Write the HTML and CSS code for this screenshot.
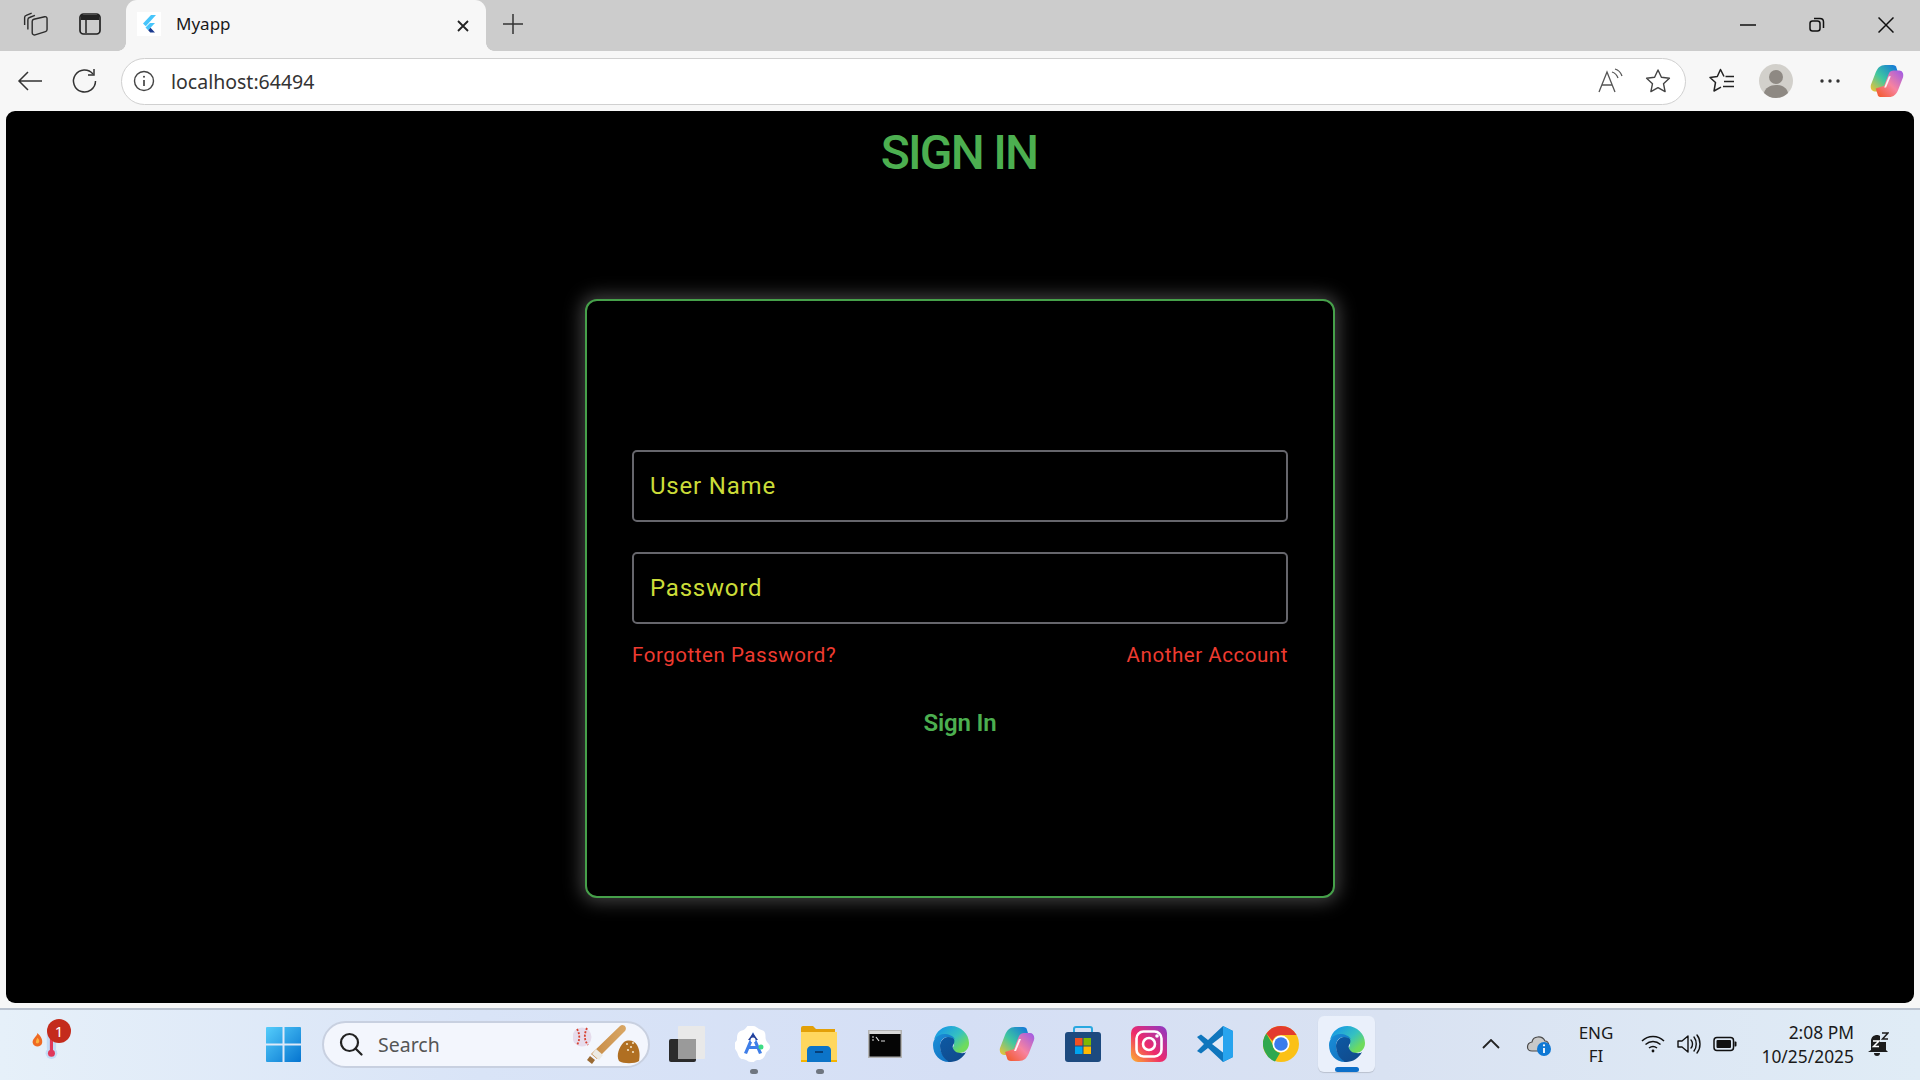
FILE: index.html
```html
<!DOCTYPE html>
<html lang="en">
<head>
<meta charset="utf-8">
<title>Myapp</title>
<link rel="stylesheet" href="styles.css">
</head>
<body>
<svg class="defs" width="0" height="0" aria-hidden="true">
  <defs>
    <linearGradient id="edgeA" x1="0.2" y1="0.1" x2="0.9" y2="0.7"><stop offset="0" stop-color="#1b9de2"/><stop offset="0.55" stop-color="#35c1c1"/><stop offset="1" stop-color="#6fdb5c"/></linearGradient>
    <linearGradient id="edgeB" x1="0" y1="0" x2="0.8" y2="1"><stop offset="0" stop-color="#0c59a4"/><stop offset="1" stop-color="#114a8b"/></linearGradient>
    <linearGradient id="edgeC" x1="0" y1="0" x2="1" y2="1"><stop offset="0" stop-color="#1b8fd8"/><stop offset="1" stop-color="#0f6cbd"/></linearGradient>
    <linearGradient id="copA" x1="0" y1="1" x2="1" y2="0"><stop offset="0" stop-color="#f9c22e"/><stop offset="0.45" stop-color="#3fc7a0"/><stop offset="1" stop-color="#0f6fe0"/></linearGradient>
    <linearGradient id="copB" x1="0" y1="1" x2="1" y2="0"><stop offset="0" stop-color="#f2551f"/><stop offset="0.5" stop-color="#f783a0"/><stop offset="1" stop-color="#9b59e8"/></linearGradient>
    <linearGradient id="winA" x1="0" y1="0" x2="1" y2="1"><stop offset="0" stop-color="#55cdfb"/><stop offset="1" stop-color="#0574d0"/></linearGradient>
    <linearGradient id="instaA" x1="0" y1="1" x2="1" y2="0"><stop offset="0" stop-color="#fdb42d"/><stop offset="0.45" stop-color="#ee2a6b"/><stop offset="1" stop-color="#8a3ac8"/></linearGradient>
    <linearGradient id="batA" x1="0" y1="0" x2="1" y2="0"><stop offset="0" stop-color="#c68a45"/><stop offset="1" stop-color="#d9a765"/></linearGradient>
    <symbol id="edge" viewBox="0 0 36 36">
      <path fill="url(#edgeA)" d="M1 14C3 5 10 0 18 0c10 0 18 8 18 17 0 6-4 10-10 10-4 0-7-2-7-4 0-1 2-2 2-5 0-4-4-7-9-7-5 0-10 1-11 3z"/>
      <path fill="url(#edgeC)" d="M0 19c0-6 5-11 11-11 5 0 9 2 11 5-2-1-4-2-7-2-5 0-8 4-8 9 0 7 5 13 12 15-1 1-2 1-3 1C7 36 0 29 0 19z"/>
      <path fill="url(#edgeB)" d="M7 20c0-5 4-9 8-9 3 0 5 1 6 2 1 2 0 5-1 6-1 2 0 5 3 7 3 1 8 2 10 0-3 6-9 10-16 10-1 0-2 0-2-1-4-2-8-8-8-15z"/>
    </symbol>
    <symbol id="copilot" viewBox="0 0 36 36">
      <path fill="url(#copA)" d="M21 1h3c2 0 4 1 4 3l2 6-9 3-5 13c-1 2-3 3-5 3H5C2 29 0 26 1 22L6 9c2-5 5-8 10-8z"/>
      <path fill="url(#copB)" d="M15 35h-3c-2 0-4-1-4-3l-2-6 9-3 5-13c1-2 3-3 5-3h6c3 0 5 3 4 7l-5 13c-2 5-5 8-10 8z"/>
      <path fill="#fff" d="M20 13h2l-5 12h-2z" opacity=".9"/>
    </symbol>
  </defs>
</svg>

<header class="titlebar">
  <div class="slot">
    <svg class="ic26" viewBox="0 0 24 24" fill="none" stroke="#2c2c2c" stroke-width="1.300" stroke-linejoin="round"><path d="M1.500 13V6c0-1 .6-1.700 1.500-2l5-2"/><path d="M4.500 17V8c0-1 .6-1.700 1.500-2l5-2"/><path d="M8.500 9.500c0-1 .6-1.600 1.500-1.900l10-2.300c1.200-.3 2.200.5 2.200 1.700V17c0 1-.6 1.700-1.500 2l-9.500 3c-1.300.4-2.700-.5-2.700-2z"/></svg>
  </div>
  <div class="slot">
    <svg class="ic22" viewBox="0 0 22 22"><rect x="1" y="1" width="20" height="20" rx="3.500" fill="none" stroke="#222" stroke-width="1.700"/><path d="M2 2h18v5H2z" fill="#222"/><path d="M7 7v13" stroke="#222" stroke-width="1.500"/></svg>
  </div>
  <div class="tab">
    <svg class="favicon" viewBox="0 0 24 24"><rect width="24" height="24" fill="#fff"/><path d="M14 3L6 11.500l2.800 2.800L19 3z" fill="#47c5fb"/><path d="M18 11h-5l-4.500 4.500 2.700 2.700z" fill="#47c5fb"/><path d="M11.200 18.200l2 2.300H18l-4.500-4.700z" fill="#1a3a8f"/></svg>
    <span class="tab-title">Myapp</span>
    <svg class="tab-close" viewBox="0 0 14 14" stroke="#222" stroke-width="1.800"><path d="M2 2l10 10M12 2L2 12"/></svg>
  </div>
  <div class="slot">
    <svg class="ic22" viewBox="0 0 22 22" stroke="#333" stroke-width="1.500"><path d="M11 1v20M1 11h20"/></svg>
  </div>
  <div class="grow"></div>
  <div class="winbtn"><svg class="ic16" viewBox="0 0 16 16" stroke="#111" stroke-width="1.500"><path d="M0 8h16"/></svg></div>
  <div class="winbtn"><svg class="ic16" viewBox="0 0 16 16" fill="none" stroke="#111" stroke-width="1.500"><rect x="1" y="4" width="10" height="10" rx="2.500"/><path d="M5 1.500h6c2.200 0 3.500 1.300 3.500 3.500v6"/></svg></div>
  <div class="winbtn"><svg class="ic16" viewBox="0 0 16 16" stroke="#111" stroke-width="1.500"><path d="M.5.500l15 15M15.500.500l-15 15"/></svg></div>
</header>

<nav class="toolbar">
  <div class="slot">
    <svg class="ic26" viewBox="0 0 26 26" fill="none" stroke="#333" stroke-width="1.500"><path d="M25 13H2M11 4l-9 9 9 9"/></svg>
  </div>
  <div class="slot">
    <svg class="ic26" viewBox="0 0 26 26" fill="none" stroke="#333" stroke-width="1.500"><path d="M22 6a11 11 0 1 0 2.500 7"/><path d="M23 1v6h-6"/></svg>
  </div>
  <div class="address">
    <svg class="ic22" viewBox="0 0 22 22" fill="none" stroke="#444" stroke-width="1.400"><circle cx="11" cy="11" r="9.500"/><path d="M11 10v6" stroke-width="1.700"/><circle cx="11" cy="6.700" r="1" fill="#444" stroke="none"/></svg>
    <span class="url">localhost:64494</span>
    <div class="grow"></div>
    <svg class="ic26 aloud" viewBox="0 0 26 26" fill="none" stroke="#555" stroke-width="1.300"><path d="M1 24L9 4l8 20M4 17h10"/><path d="M14 4c3 1 5 3 6 6M17 1c3.500 1 6 4 7 7"/></svg>
    <svg class="ic26" viewBox="0 0 26 26" fill="none" stroke="#444" stroke-width="1.400" stroke-linejoin="round"><path d="M13 2l3.400 7.300 8 1-5.900 5.400 1.600 7.900-7.100-4-7.100 4 1.600-7.900-5.900-5.400 8-1z"/></svg>
  </div>
  <div class="slot after-address">
    <svg class="ic26" viewBox="0 0 26 26" fill="none" stroke="#222" stroke-width="1.500" stroke-linejoin="round"><path d="M15 8.500L11.500 1.500 8.300 8.500 1 9.500l5.500 5-1.500 8.500 7-3.800"/><path d="M16.500 8.500H25M15 13.500h10M14 18.500h11"/></svg>
  </div>
  <div class="slot">
    <svg class="avatar" viewBox="0 0 34 34"><circle cx="17" cy="17" r="17" fill="#d2d0cb"/><circle cx="17" cy="13" r="7" fill="#8e8983"/><path d="M5 29c1-5 6-8 12-8s11 3 12 8c-3 3-7 5-12 5s-9-2-12-5z" fill="#8e8983"/></svg>
  </div>
  <div class="slot">
    <svg class="dots" viewBox="0 0 20 4" fill="#333"><circle cx="2" cy="2" r="1.700"/><circle cx="10" cy="2" r="1.700"/><circle cx="18" cy="2" r="1.700"/></svg>
  </div>
  <div class="slot wide">
    <svg class="ic34"><use href="#copilot"/></svg>
  </div>
</nav>

<main class="viewport">
  <h1 class="heading">SIGN IN</h1>
  <form class="card">
    <label class="field"><span>User Name</span></label>
    <label class="field"><span>Password</span></label>
    <div class="links">
      <a class="link">Forgotten Password?</a>
      <a class="link">Another Account</a>
    </div>
    <button class="submit" type="button">Sign In</button>
  </form>
</main>

<footer class="taskbar">
  <div class="weather">
    <svg class="weather-ic" viewBox="0 0 36 46">
      <path d="M7 5c4 4 7 8 6 13-1 6-11 6-12 0-1-4 2-6 3-8 1-1 3-3 3-5z" fill="#ef6a23"/><path d="M7 11c2 2 3 4 2 6-1 2-4 2-4 0 0-2 1-4 2-6z" fill="#fbb040"/>
      <rect x="19" y="0" width="12" height="30" rx="6" fill="#c3dcf6"/><circle cx="25" cy="31" r="7.500" fill="#c3dcf6"/><rect x="23" y="10" width="4" height="21" fill="#e0385a"/><circle cx="25" cy="31" r="4.500" fill="#e0385a"/>
    </svg>
    <span class="badge">1</span>
  </div>
  <div class="start">
    <svg class="winlogo" viewBox="0 0 35 35"><path fill="url(#winA)" d="M1 0h15.500v16.500H0V1a1 1 0 0 1 1-1zM18.500 0H34a1 1 0 0 1 1 1v15.500H18.500zM0 18.500h16.500V35H1a1 1 0 0 1-1-1zM18.500 18.500H35V34a1 1 0 0 1-1 1H18.500z"/></svg>
  </div>
  <div class="search">
    <svg class="ic24" viewBox="0 0 24 24" fill="none" stroke="#222" stroke-width="2.200"><circle cx="10.500" cy="10.500" r="8.500"/><path d="M16.500 16.500L22.500 22.500" stroke-linecap="round"/></svg>
    <span class="search-text">Search</span>
    <div class="grow"></div>
    <svg class="search-art" viewBox="0 0 70 42">
      <circle cx="9" cy="14" r="9.500" fill="#e6dcec"/><path d="M4 6c3 5 3 11 0 16M14 5c-3 6-3 12 1 17" fill="none" stroke="#d8402f" stroke-width="1.800" stroke-dasharray="2 1.500"/>
      <path d="M47 3c3-3 8 1 5 5L24 36l-6-5z" fill="url(#batA)"/><path d="M23 26l7 6-4 5-7-6z" fill="#eceae4"/><path d="M17 33l5 4-3 4-5-4z" fill="#9a6a33"/>
      <path d="M46 38c-3-6 0-14 5-19 5-3 11-1 13 3 3 5 3 11 2 16-4 3-16 3-20 0z" fill="#b06f22"/><g fill="#f2e2c4"><circle cx="54" cy="21" r="1.100"/><circle cx="58" cy="24" r="1.100"/><circle cx="60" cy="20" r="1.100"/><circle cx="55" cy="27" r="1.100"/><circle cx="60" cy="29" r="1.100"/></g>
    </svg>
  </div>
  <div class="apps">
    <div class="app">
      <svg class="ic36" viewBox="0 0 36 36"><rect x="9" y="0" width="27" height="33" rx="1" fill="#e9e9e9"/><rect x="0" y="13" width="27" height="23" rx="2" fill="#2b2b2b"/><rect x="9" y="13" width="18" height="20" fill="#9a9a9a"/></svg>
    </div>
    <div class="app dot">
      <svg class="ic36" viewBox="0 0 36 36"><path d="M18 0c3 0 4 2 6 3s5 1 6 4 0 4 1 7 4 4 4 7-3 4-4 6-1 4-4 6-5 0-7 2-2 1-4 1-3-1-5-2-4 0-6-2-2-4-3-6-3-4-3-7 3-3 3-6 0-5 2-7 4-1 6-3 3-5 6-5z" fill="#fff"/><path d="M18 6l-9 21 3 1 6-14 6 14 3-1z" fill="#3f7ee8"/><path d="M12 20h12v3H12z" fill="#3f7ee8"/><path d="M13 14h10l-5-7z" fill="#24409a"/><circle cx="18" cy="14" r="2.500" fill="#fff"/><circle cx="26" cy="21" r="2.500" fill="#3ddc84"/></svg>
    </div>
    <div class="app dot">
      <svg class="ic36" viewBox="0 0 36 36"><path d="M0 2a2 2 0 0 1 2-2h10l3 3h19v6H0z" fill="#e3a008"/><path d="M0 6h36v28H0z" fill="#ffd75e"/><path d="M6 36V24c0-2 2-4 4-4h16c2 0 4 2 4 4v12z" fill="#0c74c8"/><path d="M14 26h8" stroke="#063f78" stroke-width="2"/><path d="M0 34h6v2H0zM30 34h6v2h-6z" fill="#f5b400"/></svg>
    </div>
    <div class="app">
      <svg class="cmd" viewBox="0 0 34 28"><rect width="34" height="28" fill="#b3b3b3"/><rect x="1.500" y="4" width="31" height="22.500" fill="#050505"/><rect x="1.500" y="1" width="31" height="3" fill="#d8d8d8"/><path d="M4 7h2M4 10h2M8 7l3 4M13 11h4" stroke="#ddd" stroke-width="1.200"/></svg>
    </div>
    <div class="app"><svg class="ic36"><use href="#edge"/></svg></div>
    <div class="app"><svg class="ic36"><use href="#copilot"/></svg></div>
    <div class="app">
      <svg class="ic36" viewBox="0 0 36 36"><path d="M9 7V3c0-1 1-2 2-2h14c1 0 2 1 2 2v4" fill="none" stroke="#2aa8e0" stroke-width="2"/><rect y="6" width="36" height="30" rx="3" fill="#1d4a7f"/><rect x="10" y="12" width="7.500" height="7.500" fill="#f25022"/><rect x="18.500" y="12" width="7.500" height="7.500" fill="#7fba00"/><rect x="10" y="20.500" width="7.500" height="7.500" fill="#00a4ef"/><rect x="18.500" y="20.500" width="7.500" height="7.500" fill="#ffb900"/></svg>
    </div>
    <div class="app">
      <svg class="ic36" viewBox="0 0 36 36"><rect width="36" height="36" rx="7" fill="url(#instaA)"/><rect x="5.500" y="5.500" width="25" height="25" rx="7" fill="none" stroke="#fff" stroke-width="2.600"/><circle cx="18" cy="18" r="6" fill="none" stroke="#fff" stroke-width="2.600"/><circle cx="26" cy="10" r="1.800" fill="#fff"/></svg>
    </div>
    <div class="app">
      <svg class="ic36" viewBox="0 0 36 36"><path d="M26 0l10 5v26l-10 5-15-14-7 5.500L0 25l7-7-7-7 4-2.500L11 14z" fill="#0f76bd"/><path d="M26 0l10 5v26l-10 5z" fill="#28a4ee"/><path d="M26 9.500L15 18l11 8.500z" fill="#e2eaf7"/></svg>
    </div>
    <div class="app">
      <svg class="ic36" viewBox="0 0 36 36"><circle cx="18" cy="18" r="18" fill="#fbc116"/><path d="M18 0a18 18 0 0 1 15.600 9H18a9 9 0 0 0-8.500 6L3.300 7.500A18 18 0 0 1 18 0z" fill="#e33b2e"/><path d="M2 26A18 18 0 0 1 3.300 7.500L10 19a9 9 0 0 0 7 8l-5 8.500A18 18 0 0 1 2 26z" fill="#2fa84f"/><circle cx="18" cy="18" r="8.500" fill="#fff"/><circle cx="18" cy="18" r="6.800" fill="#3a7cec"/></svg>
    </div>
    <div class="app active"><svg class="ic36"><use href="#edge"/></svg></div>
  </div>
  <div class="grow"></div>
  <div class="tray">
    <svg class="chevron" viewBox="0 0 18 10" fill="none" stroke="#222" stroke-width="1.800"><path d="M1 9l8-8 8 8"/></svg>
    <svg class="cloud" viewBox="0 0 26 24"><path d="M6 19c-6 0-6-8 0-9 1-6 10-7 13-1 5 0 5 10 0 10z" fill="#c9c9c9" stroke="#4a4a4a" stroke-width="1.200"/><circle cx="18" cy="17" r="7" fill="#0f78d4"/><path d="M18 16v5" stroke="#fff" stroke-width="1.800"/><circle cx="18" cy="13.300" r="1.100" fill="#fff"/></svg>
    <div class="lang"><span>ENG</span><span>FI</span></div>
    <svg class="ic24 wifi" viewBox="0 0 24 18" fill="none" stroke="#111" stroke-width="1.500"><path d="M1 6c6-6 16-6 22 0M4.500 9.500c4.500-4 10.500-4 15 0M8 13c2.500-2 5.500-2 8 0"/><circle cx="12" cy="16" r="1.400" fill="#111" stroke="none"/></svg>
    <svg class="ic24" viewBox="0 0 24 24" fill="none" stroke="#111" stroke-width="1.400" stroke-linejoin="round"><path d="M1 9v6h4l6 5V4L5 9z"/><path d="M14 8c2 2 2 6 0 8M17 5c3 4 3 10 0 14M20 3c4 5 4 13 0 18" stroke-linecap="round"/></svg>
    <svg class="ic24" viewBox="0 0 24 16"><rect x="1" y="1.500" width="19.500" height="13" rx="3" fill="none" stroke="#111" stroke-width="1.500"/><rect x="3.500" y="4" width="14.500" height="8" rx="1" fill="#111"/><path d="M21.500 5.500h1a1 1 0 0 1 1 1v3a1 1 0 0 1-1 1h-1z" fill="#111"/></svg>
    <div class="clock"><span>2:08 PM</span><span>10/25/2025</span></div>
    <svg class="bell" viewBox="0 0 22 24"><path d="M4 18V9c0-4 3-6 6-6 1 0 2 0 3 1v6h6v8l2 2H1z" fill="#1c1c1c"/><path d="M7 21h6c0 2-1 3-3 3s-3-1-3-3z" fill="#1c1c1c"/><path d="M6 9h6l-5.500 5.500H12" fill="none" stroke="#fff" stroke-width="1.500"/><path d="M15 1h6l-5.500 6H21" fill="none" stroke="#1c1c1c" stroke-width="1.500"/></svg>
  </div>
</footer>
</body>
</html>
```

FILE: styles.css
```css
* { box-sizing: border-box; }
html, body { margin: 0; height: 100%; }
body {
  width: 1920px;
  height: 1080px;
  overflow: hidden;
  display: flex;
  flex-direction: column;
  background: #f7f7f7;
  font-family: "Noto Sans", "Open Sans", sans-serif;
  color: #222;
}
.defs { position: absolute; }
.grow { flex: 1; }

.titlebar {
  height: 51px;
  flex: none;
  display: flex;
  align-items: center;
  padding-left: 9px;
  background: #cccccc;
}
.slot { width: 54px; display: flex; justify-content: center; align-items: center; flex: none; }
.slot.wide { width: 60px; }
.titlebar .slot { height: 46px; margin-bottom: 4px; }
.ic16 { width: 16px; height: 16px; display: block; }
.ic22 { width: 22px; height: 22px; display: block; flex: none; }
.ic24 { width: 24px; height: 24px; display: block; flex: none; }
.ic26 { width: 26px; height: 26px; display: block; flex: none; }
.ic34 { width: 34px; height: 34px; display: block; }
.ic36 { width: 36px; height: 36px; display: block; }

.tab {
  position: relative;
  margin-left: 9px;
  width: 360px;
  height: 51px;
  display: flex;
  align-items: center;
  padding: 0 0 3px 11px;
  background: #f7f7f7;
  border-radius: 11px 11px 0 0;
}
.tab::before, .tab::after {
  content: "";
  position: absolute;
  bottom: 0;
  width: 8px;
  height: 8px;
}
.tab::before { left: -8px; background: radial-gradient(circle at 0 0, #cccccc 7.500px, #f7f7f7 8px); }
.tab::after { right: -8px; background: radial-gradient(circle at 100% 0, #cccccc 7.500px, #f7f7f7 8px); }
.favicon { width: 24px; height: 24px; flex: none; }
.tab-title { margin: 0 0 2px 15px; font-size: 17px; color: #1a1a1a; flex: 1; }
.tab-close { width: 14px; height: 14px; margin: 3px 16px 0 0; flex: none; }
.winbtn { width: 69px; display: flex; justify-content: center; margin-bottom: 2px; }

.toolbar {
  height: 60px;
  flex: none;
  display: flex;
  align-items: center;
  padding: 0 3px;
  background: #f7f7f7;
}
.toolbar .slot { height: 60px; }
.toolbar .after-address { margin-left: 9px; }
.address {
  margin-left: 10px;
  width: 1565px;
  height: 47px;
  display: flex;
  align-items: center;
  padding: 0 14px 0 11px;
  background: #fff;
  border: 1.500px solid #d0d0d0;
  border-radius: 24px;
}
.url { margin-left: 16px; font-size: 19.500px; color: #333; }
.aloud { margin-right: 21px; }
.avatar { width: 34px; height: 34px; }
.dots { width: 20px; height: 4px; }

.viewport {
  height: 892px;
  flex: none;
  margin: 0 6px;
  background: #000;
  border-radius: 9px;
  display: flex;
  flex-direction: column;
  align-items: center;
  font-family: Roboto, sans-serif;
}
.heading {
  margin: 14px 0 0;
  padding-right: 2px;
  font-size: 48px;
  line-height: 56px;
  font-weight: 500;
  letter-spacing: -1.800px;
  color: #4caf50;
}
.card {
  margin-top: 118px;
  width: 750px;
  height: 599px;
  padding: 149px 45px 0;
  display: flex;
  flex-direction: column;
  background: #000;
  border: 2px solid #46a04a;
  border-radius: 12px;
  box-shadow: 0 0 18px 4px rgba(255, 255, 255, 0.25);
}
.field {
  height: 72px;
  margin-bottom: 30px;
  display: flex;
  align-items: center;
  padding-left: 16px;
  border: 2px solid #66666c;
  border-radius: 5px;
  font-size: 24px;
  letter-spacing: 0.800px;
  color: #cbdc38;
}
.links {
  margin-top: -13px;
  display: flex;
  justify-content: space-between;
  font-size: 20.500px;
  line-height: 28px;
  letter-spacing: 0.550px;
  color: #ee3b30;
}
.submit {
  align-self: center;
  margin-top: 38px;
  padding: 0;
  border: 0;
  background: none;
  font-family: Roboto, sans-serif;
  font-size: 24px;
  line-height: 32px;
  font-weight: 600;
  letter-spacing: -0.200px;
  color: #4caf50;
}

.taskbar {
  margin-top: 5px;
  height: 72px;
  flex: none;
  display: flex;
  align-items: center;
  padding-bottom: 2px;
  border-top: 2px solid #b9c2cf;
  background: linear-gradient(90deg, #e6f0f9 0%, #d9e4f7 25%, #d5dff5 50%, #d9e2f2 72%, #e0ecf6 100%);
}
.weather { position: relative; width: 40px; height: 46px; margin-left: 30px; }
.weather-ic { width: 28px; height: 36px; position: absolute; left: 2px; top: 8px; }
.badge {
  position: absolute;
  left: 17px;
  top: -2px;
  width: 24px;
  height: 24px;
  border-radius: 50%;
  background: #c42b1c;
  color: #fff;
  font: 15px/24px "Noto Sans", sans-serif;
  text-align: center;
}
.start { margin-left: 196px; width: 35px; height: 35px; }
.winlogo { width: 35px; height: 35px; display: block; }
.search {
  margin-left: 21px;
  width: 328px;
  height: 47px;
  display: flex;
  align-items: center;
  padding: 0 5px 0 15px;
  background: #f3f6fd;
  border: 2px solid #c8d0e0;
  border-radius: 24px;
}
.search-text { margin-left: 15px; font-size: 19.500px; color: #555; }
.search-art { width: 70px; height: 42px; flex: none; }
.apps { margin-left: 4px; display: flex; align-items: center; }
.app {
  position: relative;
  width: 66px;
  height: 56px;
  display: flex;
  align-items: center;
  justify-content: center;
}
.app.dot::after {
  content: "";
  position: absolute;
  bottom: -2px;
  left: 30px;
  width: 8px;
  height: 5px;
  border-radius: 3px;
  background: #6f7680;
}
.app.active { background: #eaf0fb; border-radius: 6px; box-shadow: 0 1px 1px rgba(0,0,0,.15); width: 57px; margin: 0 4px; }
.app.active::after {
  content: "";
  position: absolute;
  bottom: 0;
  left: 17px;
  width: 24px;
  height: 5px;
  border-radius: 3px;
  background: #0c6fc9;
}
.cmd { width: 34px; height: 28px; }
.tray { display: flex; align-items: center; padding-right: 66px; position: relative; }
.chevron { width: 18px; height: 10px; }
.cloud { width: 26px; height: 24px; margin-left: 26px; }
.lang { margin-left: 23px; display: flex; flex-direction: column; align-items: center; font-size: 17px; line-height: 23px; color: #1a1a1a; width: 42px; }
.wifi { margin-left: 24px; height: 18px; }
.tray > .ic24 + .ic24 { margin-left: 12px; }
.clock { margin-left: 24px; display: flex; flex-direction: column; align-items: flex-end; font-size: 17.400px; line-height: 24px; color: #1a1a1a; width: 93px; }
.bell { width: 22px; height: 24px; position: absolute; right: 31px; }
```
